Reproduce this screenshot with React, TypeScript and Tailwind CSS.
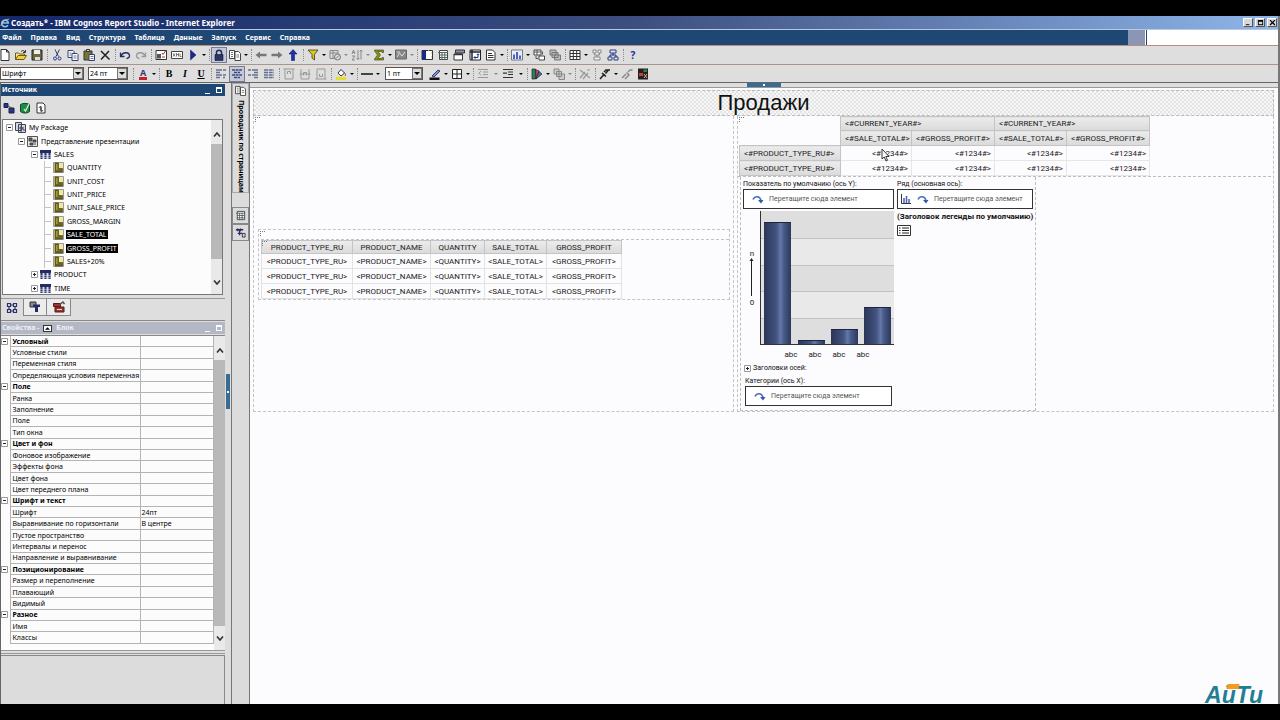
import type { ReactNode } from "react";

const ICONS: Record<string, ReactNode> = {
  new: <path d="M2 .5h5.500L10 3v8.500H2zM7.500.5V3H10" fill="#fff" stroke="#333" />,
  open: (
    <>
      <path d="M.5 10.500V4h3l1 1h5v1.500" fill="#ffe98a" stroke="#6b5b12" />
      <path d="M.5 10.500 3 6.500h8.500l-2.500 4z" fill="#f3cf3f" stroke="#6b5b12" />
      <path d="M6 2.500c1.500-1.500 3-1 4 .5M10.500 1v2.500H8" fill="none" stroke="#333" />
    </>
  ),
  save: (
    <>
      <path d="M1 1h10v10H1z" fill="#6b6a3c" stroke="#222" />
      <path d="M3 1h6v4H3z" fill="#eee" />
      <path d="M4 8h5v3H4z" fill="#ddd" />
    </>
  ),
  cut: (
    <>
      <path d="M4 .5 7.500 7.500M8.500.5 5 7.500" fill="none" stroke="#33406f" />
      <circle cx="4" cy="9.500" r="1.500" fill="none" stroke="#2a3c8c" />
      <circle cx="8.500" cy="9.500" r="1.500" fill="none" stroke="#2a3c8c" />
    </>
  ),
  copy: (
    <>
      <path d="M1 1.500h5l1 1v6H1z" fill="#fff" stroke="#33406f" />
      <path d="M5 4.500h5l1 1v6H5z" fill="#fff" stroke="#33406f" />
      <path d="M6.500 7h3M6.500 9h3M2.500 4h2M2.500 6h2" stroke="#6c78a8" />
    </>
  ),
  paste: (
    <>
      <path d="M1 2h8v9H1z" fill="#7b7433" stroke="#333" />
      <path d="M3.500.5h3v2h-3z" fill="#ddd" stroke="#333" />
      <path d="M6 5.500h5.500v6H6z" fill="#fff" stroke="#33406f" />
      <path d="M7.500 7.500h3M7.500 9.500h3" stroke="#6c78a8" />
    </>
  ),
  del: <path d="M2 2 10.500 10.500M10 2 2 10.500" fill="none" stroke="#222" strokeWidth="1.500" />,
  undo: <path d="M1.500 3.500v4h4M2 7c1.500-4 8-4.500 8.500-.5.2 1.500-1 3-3 3" fill="none" stroke="#222c66" strokeWidth="1.300" />,
  redo: <path d="M10.500 3.500v4h-4M10 7C8.500 3 2 2.500 1.500 6.500c-.2 1.500 1 3 3 3" fill="none" stroke="#999" strokeWidth="1.300" />,
  validate: (
    <>
      <path d="M1 1.500h10.500v9H1z" fill="#fff" stroke="#333" />
      <path d="M2 5h4v4.500H2z" fill="#555" />
      <path d="M7 4l1 1.500L10.500 2M7 8h3" fill="none" stroke="#a33" />
    </>
  ),
  xml: (
    <>
      <path d="M.5 2.500h11v7H.5z" fill="#fff" stroke="#444" />
      <path d="M2 4.500 4 7.500M4 4.500 2 7.500M5.500 7.500v-3l1 1.500 1-1.500v3M9 4.500v3h1.500" fill="none" stroke="#555" strokeWidth=".8" />
    </>
  ),
  run: <path d="M3.500 1v10L9 6z" fill="#1a2b8f" stroke="#10195c" strokeWidth=".5" />,
  lock: (
    <>
      <path d="M3.500 6V3.500c0-3 5-3 5 0V6" fill="none" stroke="#222a55" strokeWidth="1.500" />
      <path d="M2 5.500h8v6H2z" fill="#2b3468" stroke="#111633" strokeWidth=".6" />
    </>
  ),
  pages: (
    <>
      <path d="M.5 1.500h5v8h-5zM6 2.500h3.500l2 2v7H6z" fill="#fff" stroke="#444" />
      <path d="M2 3.500h2M2 5.500h2M2 7.500h2M7.500 6h2.500M7.500 8h2.500" stroke="#777" />
    </>
  ),
  back: <path d="M.5 6 5 2.500v2.300h6.500v2.400H5v2.300z" fill="#777" />,
  forward: <path d="M11.500 6 7 2.500v2.300H.5v2.400H7v2.300z" fill="#777" />,
  up: <path d="M6 .5 10 5H7.500v6.500h-3V5H2z" fill="#1f2fae" stroke="#141d66" strokeWidth=".6" />,
  filter: <path d="M1 1h10L7.500 5.500V11L5 9V5.500z" fill="#d8c62c" stroke="#3c3a14" strokeWidth=".8" />,
  filterOff: (
    <>
      <path d="M1 1.500h8v8H1zM1 4h8M4 1.500v8" fill="none" stroke="#888" />
      <circle cx="8.500" cy="8" r="3" fill="#ddd" stroke="#777" />
      <path d="m7 9.500 3-3" stroke="#777" />
    </>
  ),
  sort: (
    <path d="M1 5l1.500-4L4 5M1.500 3.500h2M1 7h3l-3 4h3M7 1v9.500M5.500 9 7 10.500 8.500 9M10 10.500V1M9 2.500 10 1l1.500 1.500" fill="none" stroke="#888" />
  ),
  sigma: (
    <path d="M1.500 1h9v2.500H9L8.500 2.500H5L7.500 6 5 9.500h3.500L9 8.500h1.500V11h-9v-1L4.500 6l-3-4z" fill="#8b8f1c" stroke="#3c3e12" strokeWidth=".6" />
  ),
  explore: (
    <>
      <path d="M.5 1h11v9H.5z" fill="#888" stroke="#666" />
      <path d="M2 8l2.500-4L7 7l3-4M2 3h3" fill="none" stroke="#ddd" />
    </>
  ),
  section: (
    <>
      <path d="M1 1.500h10.500v9H1z" fill="#fff" stroke="#333" />
      <path d="M1 1.500h4v9H1z" fill="#1c2a86" />
      <path d="M7 1.500h1M10 4h1M10 8h1" stroke="#c9b93c" />
    </>
  ),
  pivot: (
    <>
      <path d="M2.500 1.500h8v9h-8z" fill="#fff" stroke="#444" />
      <path d="M1 3.500h10M2.500 6h8M2.500 8.500h8M5 3v8M7.800 3v8" stroke="#566" />
    </>
  ),
  header: (
    <>
      <path d="M2.500 1h9v3h-9z" fill="#8d93a8" stroke="#333" />
      <path d="M1 5h8.500v6H1z" fill="#fff" stroke="#333" />
      <path d="M1 5.500h8.500" stroke="#333" strokeWidth="1.500" />
    </>
  ),
  swap: (
    <>
      <path d="M1 1h10.500v10H1z" fill="#fff" stroke="#222" />
      <path d="M1 3h10M3 1v10" stroke="#223" strokeWidth="1.500" />
      <path d="M5 8.500h4V5M7.800 6 9 4.800 10.200 6M6.200 7.300 5 8.500l1.200 1.200" fill="none" stroke="#1c2a86" />
    </>
  ),
  doc: (
    <>
      <path d="M1.500 1h6L10 3.500V11H1.500z" fill="#fff" stroke="#333" />
      <path d="M3 4.500h4M3 6.500h5.500M3 8.500h5.500" stroke="#333" />
    </>
  ),
  chart: (
    <>
      <path d="M.5 1h11v10H.5z" fill="#e8ecff" stroke="#777" />
      <path d="M3 10V5.500M6 10V3M9 10V6.500" stroke="#2b3fb0" strokeWidth="1.600" />
    </>
  ),
  linkTable: (
    <>
      <path d="M1 1h7v5H1zM6 7h5.500v4H6z" fill="#fff" stroke="#444" />
      <path d="M1 3h7M4 1v5M9.500 2.500v3M3 7v2.500h2" fill="none" stroke="#555" />
    </>
  ),
  linkOff: <path d="M1 1h6v5H1zM3 3.500h6v5H3zM5.500 6h6v5h-6z" fill="#bbb" stroke="#777" />,
  table: <path d="M1 1.500h10v9H1zM1 4.500h10M1 7.500h10M4.300 1.500v9M7.700 1.500v9" fill="#fff" stroke="#333" />,
  splitOff: <path d="M2 1h3v3H2zM7 1h3v3H7zM3 8h6v3H3zM3.500 4v2h5V4M6 6v2" fill="#eee" stroke="#888" />,
  split: (
    <>
      <path d="M3 1h6v3H3zM1 8h4v3H1zM7 8h4v3H7z" fill="#dfe4ff" stroke="#333d70" />
      <path d="M6 4v2M3 8V6h6v2" fill="none" stroke="#1c2a86" />
    </>
  ),
  alignLeft: <path d="M1 2h6M8 2h3M1 4.500h4M1 7h6M8 7h3M1 9.500h4M8 9.500h2" stroke="#66718f" strokeWidth="1.300" />,
  alignCenter: <path d="M1 2h10M3 4.500h6M1 7h10M3 9.500h6" stroke="#3c4a7c" strokeWidth="1.500" strokeDasharray="3 .6" />,
  alignRight: <path d="M1 2h3M5 2h6M7 4.500h4M1 7h3M5 7h6M7 9.500h4" stroke="#66718f" strokeWidth="1.300" />,
  justify: <path d="M1 2h10M1 4.500h10M1 7h10M1 9.500h10" stroke="#66718f" strokeWidth="1.300" strokeDasharray="4 .7" />,
  vTop: <path d="M.5 1h11M2 1v10h8V1M4.500 6V3.500h3V6" fill="none" stroke="#999" />,
  vMid: <path d="M.5 6h11M2 1v10h8V1M4.500 7.500v-3h3v3" fill="none" stroke="#999" />,
  vBottom: <path d="M.5 11h11M2 11V1h8v10M4.500 6v2.500h3V6" fill="none" stroke="#999" />,
  lineStyle: <path d="M0 6h12" stroke="#111" strokeWidth="1.500" />,
  borders: <path d="M1.500 1.500h9v9h-9zM6 1.500v9M1.500 6h9" fill="#fff" stroke="#222" />,
  indentOff: <path d="M1 1.500h10M6 4h5M6 6.500h5M1 9.500h10M4 3 2 5.200 4 7.500" fill="none" stroke="#999" />,
  indent: <path d="M1 1.500h10M6 4h5M6 6.500h5M1 9.500h10M1 5.200h4" fill="none" stroke="#333" strokeWidth="1.200" />,
  styles: (
    <>
      <path d="M1 1h3.500v10H1z" fill="#2d7c5f" stroke="#222" strokeWidth=".7" />
      <path d="M4.500 1.500 8 3 5 11z" fill="#c2503c" stroke="#222" strokeWidth=".7" />
      <path d="M8 3.500 11 6l-6 5z" fill="#4f69c9" stroke="#222" strokeWidth=".7" />
    </>
  ),
  group: <path d="M1 1h5v5H1zM3.500 3.500h5v5h-5zM6 6h5.500v5.500H6z" fill="#ccc" stroke="#888" />,
  clear: <path d="M1 10l5-6M4 11l5-6M1 2l10 8M8 2h3" fill="none" stroke="#999" strokeWidth="1.200" />,
  pick: <path d="M1 11l4.500-5M3 5l4 3.500M6.500 5.500 9 2.500M5 4l2-2h4" fill="none" stroke="#222" strokeWidth="1.600" />,
  apply: <path d="M1 10l4-4M4 11l4-4M5.500 4.500l3 3M9 2h2.500M7 4l2-2" fill="none" stroke="#888" strokeWidth="1.400" />,
  cond: (
    <>
      <path d="M1 .5h10v11H1z" fill="#222" />
      <path d="M2 5h4v3H2z" fill="#d23b2f" />
      <path d="M6.500 1.500h3.500V4H6.500z" fill="#2e8a3a" />
      <path d="M7 6l3 4M10 6 7 10" stroke="#e8a0a0" />
    </>
  ),
};

function Glyph({ name, className = "size-3" }: { name: string; className?: string }) {
  return (
    <svg viewBox="0 0 12 12" className={`${className} shrink-0`} aria-hidden="true">
      {ICONS[name]}
    </svg>
  );
}

function Tool({ name, label, pressed }: { name: string; label: string; pressed?: boolean }) {
  return (
    <button
      aria-label={label}
      className={`flex h-4 w-4 shrink-0 items-center justify-center ${pressed ? "border border-[#777c94] bg-[#c5c8d6]" : ""}`}
    >
      <Glyph name={name} />
    </button>
  );
}

function TextTool({ label, children }: { label: string; children: ReactNode }) {
  return (
    <button aria-label={label} className="flex h-4 w-4 shrink-0 items-center justify-center font-['Liberation_Serif',serif] text-[10px] leading-3 font-bold">
      {children}
    </button>
  );
}

function Arrow({ wide, off }: { wide?: boolean; off?: boolean }) {
  return (
    <button aria-label="Открыть список" className={`flex h-4 shrink-0 items-center justify-center ${wide ? "w-[9px]" : "w-[6px]"} ${off ? "text-[#888]" : "text-black"}`}>
      <svg viewBox="0 0 4 2" className="h-[2px] w-1" aria-hidden="true">
        <path d="M0 0h4L2 2z" fill="currentColor" />
      </svg>
    </button>
  );
}

function Sep() {
  return (
    <span className="flex w-1 shrink-0 justify-center">
      <span className="h-3 border-l border-dotted border-[#8a8a8a]" />
    </span>
  );
}

function Combo({ label, value, className }: { label: string; value: string; className: string }) {
  return (
    <span className={`relative flex h-[13px] shrink-0 border border-[#555] bg-white ${className}`}>
      <select aria-label={label} className="w-full appearance-none px-px text-[7px] leading-[11px] outline-none">
        <option>{value}</option>
      </select>
      <span className="pointer-events-none absolute inset-y-0 right-0 flex w-[10px] items-center justify-center border border-[#777] bg-[#dcdcdc]">
        <svg viewBox="0 0 6 3" className="h-[3px] w-[6px]" aria-hidden="true">
          <path d="M0 0h6L3 3z" />
        </svg>
      </span>
    </span>
  );
}

function TitleBar() {
  return (
    <header className="flex h-[13px] shrink-0 items-center justify-between bg-linear-to-r from-[#14286a] via-[#3d4f80] to-[#8fb6ea]">
      <div className="flex items-center gap-px text-white">
        <svg viewBox="0 0 12 12" className="size-[10px]" aria-hidden="true">
          <path d="M9.500 8.500A4 4 0 1 1 10 6H3" fill="none" stroke="#7cc4f2" strokeWidth="2" />
          <path d="M1 9.500C2 5 7 1 11 1.500" fill="none" stroke="#e8c860" />
        </svg>
        <h1 className="text-[8px] leading-3 font-bold whitespace-nowrap">Создать* - IBM Cognos Report Studio - Internet Explorer</h1>
      </div>
      <div className="flex gap-[2px] pr-px">
        {[
          ["Свернуть", "M1 6h4v1H1z"],
          ["Развернуть", "M1 1h6v6H1zM2 3v3h4V3z"],
          ["Закрыть", "M1 1h1l2 2 2-2h1v1L5 4l2 2v1H6L4 5 2 7H1V6l2-2-2-2z"],
        ].map(([label, d]) => (
          <button key={label} aria-label={label} className="flex h-[9px] w-[10px] items-center justify-center border border-t-white border-r-[#555] border-b-[#555] border-l-white bg-[#d8d8d8]">
            <svg viewBox="0 0 8 8" className="size-[7px]" aria-hidden="true">
              <path d={d} fillRule="evenodd" />
            </svg>
          </button>
        ))}
      </div>
    </header>
  );
}

const MENU = ["Файл", "Правка", "Вид", "Структура", "Таблица", "Данные", "Запуск", "Сервис", "Справка"];

function MenuBar() {
  return (
    <nav className="flex h-4 shrink-0 border-t border-[#b9c9dd] bg-[#1f4774]">
      <div className="flex flex-1 items-center gap-[9px] pl-[2px] text-white">
        {MENU.map((m) => (
          <button key={m} className="text-[7px] leading-3 font-bold">
            {m}
          </button>
        ))}
      </div>
      <div className="w-[18px] border-r border-white bg-[#8a96b4]" />
      <div className="ml-px w-[131px] bg-white" />
    </nav>
  );
}

function MainTools() {
  return (
    <div className="flex h-[19px] shrink-0 items-center overflow-hidden border-t border-[#b98f7c] bg-[#dedede]">
      <div className="-ml-[3px] flex items-center">
        <Tool name="new" label="Создать" />
        <Tool name="open" label="Открыть" />
        <Tool name="save" label="Сохранить" />
        <Sep />
        <Tool name="cut" label="Вырезать" />
        <Tool name="copy" label="Копировать" />
        <Tool name="paste" label="Вставить" />
        <Tool name="del" label="Удалить" />
        <Sep />
        <Tool name="undo" label="Отменить" />
        <Tool name="redo" label="Повторить" />
        <Sep />
        <Tool name="validate" label="Проверить" />
        <Tool name="xml" label="XML" />
        <Tool name="run" label="Запустить" />
        <Arrow />
        <Sep />
        <Tool name="lock" label="Заблокировать" pressed />
        <Tool name="pages" label="Страницы" />
        <Arrow />
        <Sep />
        <Tool name="back" label="Назад" />
        <Tool name="forward" label="Вперед" />
        <Tool name="up" label="Вверх" />
        <Sep />
        <Tool name="filter" label="Фильтры" />
        <Arrow />
        <Tool name="filterOff" label="Подавить" />
        <Arrow off />
        <Tool name="sort" label="Сортировать" />
        <Arrow off />
        <Tool name="sigma" label="Итоги" />
        <Arrow />
        <Tool name="explore" label="Исследовать" />
        <Arrow off />
        <Sep />
        <Tool name="section" label="Раздел" />
        <Tool name="pivot" label="Перекрестная таблица" />
        <Tool name="header" label="Заголовок" />
        <Tool name="swap" label="Поменять местами" />
        <Tool name="doc" label="Колонтитулы" />
        <Arrow />
        <Sep />
        <Tool name="chart" label="Диаграмма" />
        <Arrow />
        <Tool name="linkTable" label="Связать" />
        <Tool name="linkOff" label="Детализация" />
        <Sep />
        <Tool name="table" label="Вставить таблицу" />
        <Arrow />
        <Tool name="splitOff" label="Объединить" />
        <Tool name="split" label="Разделить" />
        <Sep />
        <TextTool label="Справка">
          <span className="font-['Noto_Sans',sans-serif] text-[#22309c]">?</span>
        </TextTool>
      </div>
    </div>
  );
}

function FormatTools() {
  return (
    <div className="flex h-[19px] shrink-0 items-center overflow-hidden border-t border-b border-t-[#a8958c] border-b-[#666] bg-[#dedede]">
      <Combo label="Шрифт" value="Шрифт" className="mr-1 w-[84px]" />
      <Combo label="Размер" value="24 пт" className="mr-[3px] w-10" />
      <Sep />
      <TextTool label="Цвет текста">
        <span className="h-3 border-b-[3px] border-[#c8202c] px-px font-['Noto_Sans',sans-serif] text-[9px] leading-[9px] text-[#33406f]">A</span>
      </TextTool>
      <Arrow />
      <Sep />
      <TextTool label="Полужирный">B</TextTool>
      <TextTool label="Курсив">
        <i>I</i>
      </TextTool>
      <TextTool label="Подчеркнутый">
        <u>U</u>
      </TextTool>
      <Sep />
      <Tool name="alignLeft" label="По левому краю" />
      <Tool name="alignCenter" label="По центру" pressed />
      <Tool name="alignRight" label="По правому краю" />
      <Tool name="justify" label="По ширине" />
      <Sep />
      <Tool name="vTop" label="По верхнему краю" />
      <Tool name="vMid" label="По середине" />
      <Tool name="vBottom" label="По нижнему краю" />
      <Sep />
      <button aria-label="Цвет фона" className="flex h-4 w-4 shrink-0 items-center justify-center">
        <svg viewBox="0 0 12 12" className="size-3" aria-hidden="true">
          <path d="M3 5 6 1.500 9.500 5 6 8z" fill="#fff" stroke="#333" />
          <path d="M9.500 5c1.500 1 1 2.500.5 3" fill="none" stroke="#a33" />
          <path d="M1 9h10v3H1z" fill="#e6df2a" />
        </svg>
      </button>
      <Arrow />
      <Sep />
      <Tool name="lineStyle" label="Стиль линии" />
      <Arrow />
      <Combo label="Толщина" value="1 пт" className="mx-1 w-[38px]" />
      <button aria-label="Цвет линии" className="flex h-4 w-4 shrink-0 items-center justify-center">
        <svg viewBox="0 0 12 12" className="size-3" aria-hidden="true">
          <path d="M3 8 9 2l2 1-6 6z" fill="#7f93cf" stroke="#333d70" />
          <path d="M.5 9.500h10V12H.5z" fill="#111" />
        </svg>
      </button>
      <Arrow />
      <Tool name="borders" label="Границы" />
      <Arrow />
      <Sep />
      <Tool name="indentOff" label="Уменьшить отступ" />
      <Arrow wide off />
      <Tool name="indent" label="Увеличить отступ" />
      <Arrow wide />
      <Sep />
      <Tool name="styles" label="Стили" />
      <Arrow />
      <Tool name="group" label="Группировать" />
      <Arrow off />
      <Sep />
      <Tool name="clear" label="Очистить" />
      <Sep />
      <Tool name="pick" label="Взять стиль" />
      <Arrow />
      <Tool name="apply" label="Применить стиль" />
      <Tool name="cond" label="Условные стили" />
    </div>
  );
}

function PaneHeader({ className, children }: { className: string; children: ReactNode }) {
  return (
    <div className={`flex h-3 shrink-0 items-center text-[7px] leading-3 font-bold text-white ${className}`}>
      {children}
      <button aria-label="Свернуть" className="ml-auto flex h-2 w-2 items-end">
        <span className="h-px w-[5px] bg-white" />
      </button>
      <button aria-label="Развернуть" className="mx-[3px] h-[6px] w-[6px] border border-t-2 border-white" />
    </div>
  );
}

function Toggle({ open }: { open: boolean }) {
  return (
    <button aria-label={open ? "Свернуть" : "Развернуть"} className="size-[7px] shrink-0">
      <svg viewBox="0 0 7 7" className="size-[7px]" aria-hidden="true">
        <path d="M.5.5h6v6h-6z" fill="#fff" stroke="#999" />
        <path d={open ? "M2 3.500h3" : "M2 3.500h3M3.500 2v3"} stroke="#222" />
      </svg>
    </button>
  );
}

function TreeIcon({ kind }: { kind: string }) {
  return (
    <svg viewBox="0 0 11 11" className="size-[11px] shrink-0" aria-hidden="true">
      {kind === "package" && (
        <>
          <path d="M.5.5h6v8h-6zM3.500 2.500h7v8h-7z" fill="#d5d8e6" stroke="#444" />
          <path d="M5 5h2v2H5zM8 8h2M8 5v3M5 9h2" fill="none" stroke="#39447a" />
        </>
      )}
      {kind === "view" && (
        <>
          <path d="M.5.5h10v10H.5z" fill="#e4e4e4" stroke="#555" />
          <path d="M2 2h3v3H2zM6 4h3v2H6zM3 7h3v2H3zM7 8h2" fill="#666" stroke="#333" strokeWidth=".8" />
        </>
      )}
      {kind === "subject" && (
        <>
          <path d="M0 1h11v3H0z" fill="#252a63" />
          <path d="M0 4h11v6H0z" fill="#d5d8e6" />
          <path d="M1.500 4v6M5.500 4v6M9.500 4v6" stroke="#31386e" strokeWidth="2" strokeDasharray="2 .5" />
        </>
      )}
      {kind === "measure" && (
        <>
          <path d="M.5.5h10v10H.5z" fill="#efe9a8" stroke="#999" />
          <path d="M2 1h3.500v5.500H9.500V10H2z" fill="#6d661a" stroke="#3e3a10" strokeWidth=".6" />
          <path d="M3 3h1.500M3 5h1.500M3 7h1.500" stroke="#d9d164" />
        </>
      )}
    </svg>
  );
}

interface TreeRow {
  label: string;
  level: number;
  kind: string;
  open?: boolean;
  selected?: boolean;
}

const TREE: TreeRow[] = [
  { label: "My Package", level: 0, kind: "package", open: true },
  { label: "Представление презентации", level: 1, kind: "view", open: true },
  { label: "SALES", level: 2, kind: "subject", open: true },
  { label: "QUANTITY", level: 3, kind: "measure" },
  { label: "UNIT_COST", level: 3, kind: "measure" },
  { label: "UNIT_PRICE", level: 3, kind: "measure" },
  { label: "UNIT_SALE_PRICE", level: 3, kind: "measure" },
  { label: "GROSS_MARGIN", level: 3, kind: "measure" },
  { label: "SALE_TOTAL", level: 3, kind: "measure", selected: true },
  { label: "GROSS_PROFIT", level: 3, kind: "measure", selected: true },
  { label: "SALES+20%", level: 3, kind: "measure" },
  { label: "PRODUCT", level: 2, kind: "subject", open: false },
  { label: "TIME", level: 2, kind: "subject", open: false },
];

const INDENT = ["pl-[3px]", "pl-[15px]", "pl-[28px]", "pl-[41px]"];

function ScrollBar({ thumb }: { thumb: string }) {
  return (
    <div className="flex w-[11px] shrink-0 flex-col bg-[#e9e9e9]">
      <button aria-label="Прокрутить вверх" className="flex h-6 items-center justify-center pt-1">
        <svg viewBox="0 0 8 5" className="h-[5px] w-2" aria-hidden="true">
          <path d="M1 4.500 4 1l3 3.500" fill="none" stroke="#333" strokeWidth="1.600" />
        </svg>
      </button>
      <div className={thumb} />
      <button aria-label="Прокрутить вниз" className="mt-auto flex h-6 items-center justify-center">
        <svg viewBox="0 0 8 5" className="h-[5px] w-2" aria-hidden="true">
          <path d="M1 .5 4 4l3-3.500" fill="none" stroke="#333" strokeWidth="1.600" />
        </svg>
      </button>
    </div>
  );
}

function SourcePane() {
  return (
    <section className="flex shrink-0 flex-col">
      <PaneHeader className="bg-[#1f4774] pl-px">Источник</PaneHeader>
      <div className="flex h-[23px] items-center gap-1 pl-[2px]">
        <button aria-label="Объекты">
          <svg viewBox="0 0 12 12" className="size-3" aria-hidden="true">
            <path d="M1 1.500h4v4H1zM6 6h5v5H6z" fill="#2b3680" stroke="#1a2050" />
            <path d="M5 4l4 2" stroke="#555" />
          </svg>
        </button>
        <button aria-label="Источник данных">
          <svg viewBox="0 0 12 12" className="size-3" aria-hidden="true">
            <path d="M1.500 2.500C3 1 9 1 10.500 2.500v7C9 11.500 3 11.500 1.500 9.500z" fill="#1f8a46" stroke="#0c4a22" />
            <path d="M5 7l1.500 2L10 2" fill="none" stroke="#d7f0dc" strokeWidth="1.200" />
          </svg>
        </button>
        <button aria-label="Обновить">
          <svg viewBox="0 0 12 12" className="size-3" aria-hidden="true">
            <path d="M2 1h6l2 2v8H2z" fill="#fff" stroke="#333" />
            <path d="M4 6l1.500-2L7 6M5 8l1.500 2L8 8M5.500 4.500V8M6.500 6v3" fill="none" stroke="#333" strokeWidth=".8" />
          </svg>
        </button>
      </div>
      <div className="mr-[2px] ml-px flex h-[176px] overflow-hidden border border-[#777] bg-[#fcfcfc]">
        <ul className="grid h-[175px] flex-1 auto-rows-fr pt-px text-[7px] leading-[9px]">
          {TREE.map((row) => (
            <li key={row.label} className={`flex items-center gap-[2px] whitespace-nowrap ${INDENT[row.level]}`}>
              {row.open === undefined ? (
                <span className="flex w-[7px] items-center self-stretch border-l border-[#c4c4c4]">
                  <span className="w-full border-t border-[#c4c4c4]" />
                </span>
              ) : (
                <Toggle open={row.open} />
              )}
              <TreeIcon kind={row.kind} />
              <span className={row.selected ? "bg-black px-px text-white" : "px-px"}>{row.label}</span>
            </li>
          ))}
        </ul>
        <ScrollBar thumb="h-[115px] bg-[#b9b9b9]" />
      </div>
      <div className="mt-[3px] flex h-[18px] border-t border-[#999]">
        <button aria-label="Источник" className="flex w-[22px] items-center justify-center">
          <svg viewBox="0 0 12 12" className="size-3" aria-hidden="true">
            <path d="M1.500 1.500h3v3h-3zM7.500 1.500h3v3h-3zM1.500 7.500h3v3h-3zM7.500 7.500h3v3h-3zM4.500 3h3M3 4.500v3M9 4.500v3M4.500 9h3" fill="none" stroke="#2b3166" strokeWidth="1.200" />
          </svg>
        </button>
        <button aria-label="Элементы данных" className="flex w-6 items-center justify-center border-r border-b border-l border-[#888] bg-[#ececec]">
          <svg viewBox="0 0 12 12" className="size-3" aria-hidden="true">
            <path d="M1 1h6v5H1z" fill="#888" stroke="#333" />
            <path d="M4 3.500h7v2.500H9V11H6V6H4z" fill="#252a63" />
          </svg>
        </button>
        <button aria-label="Инструменты" className="flex w-6 items-center justify-center border-r border-b border-[#888] bg-[#ececec]">
          <svg viewBox="0 0 12 12" className="size-3" aria-hidden="true">
            <path d="M.5 2.500h7v3h-7zM2 6h9v5H2z" fill="#a3322c" stroke="#5a1a18" />
            <path d="M6 4l4-3 1.500 2" fill="none" stroke="#555" strokeWidth="1.500" />
            <path d="M4 8.500h5" stroke="#ddd" />
          </svg>
        </button>
      </div>
    </section>
  );
}

const PROPS: { group: string; rows: [string, string][] }[] = [
  { group: "Условный", rows: [["Условные стили", ""], ["Переменная стиля", ""], ["Определяющая условия переменная", ""]] },
  { group: "Поле", rows: [["Ранка", ""], ["Заполнение", ""], ["Поле", ""], ["Тип окна", ""]] },
  { group: "Цвет и фон", rows: [["Фоновое изображение", ""], ["Эффекты фона", ""], ["Цвет фона", ""], ["Цвет переднего плана", ""]] },
  {
    group: "Шрифт и текст",
    rows: [["Шрифт", "24пт"], ["Выравнивание по горизонтали", "В центре"], ["Пустое пространство", ""], ["Интервалы и перенос", ""], ["Направление и выравнивание", ""]],
  },
  { group: "Позиционирование", rows: [["Размер и переполнение", ""], ["Плавающий", ""], ["Видимый", ""]] },
  { group: "Разное", rows: [["Имя", ""], ["Классы", ""]] },
];

function PropertiesPane() {
  return (
    <section className="mt-1 flex min-h-0 flex-1 flex-col border-t border-[#888] pt-px">
      <PaneHeader className="bg-[#b4b8c4] pl-px">
        <span className="text-[#eef0f5]">Свойства -</span>
        <span className="mx-1 flex h-[7px] w-[9px] items-center justify-center border border-[#333] bg-white">
          <svg viewBox="0 0 6 3" className="h-[3px] w-[5px]" aria-hidden="true">
            <path d="M0 3h6L3 0z" />
          </svg>
        </span>
        <span className="text-[#eef0f5]">Блок</span>
      </PaneHeader>
      <div className="mt-px flex border-t border-[#888] bg-[#fcfcfc]">
        <div className="min-w-0 flex-1 pb-[6px]">
          <table className="h-[308px] w-full table-fixed border-collapse text-[7px] leading-[9px]">
            <colgroup>
              <col className="w-[9px]" />
              <col className="w-[130px]" />
              <col />
            </colgroup>
            <tbody>
              {PROPS.map((g) => [
                <tr key={g.group}>
                  <td className="p-0">
                    <span className="flex">
                      <Toggle open />
                    </span>
                  </td>
                  <th scope="rowgroup" className="border border-t-0 border-[#b4b4b4] p-0 pl-[2px] text-left font-bold">
                    {g.group}
                  </th>
                  <td className="border-r border-b border-[#b4b4b4] p-0" />
                </tr>,
                ...g.rows.map(([name, value]) => (
                  <tr key={`${g.group}-${name}`}>
                    <td className="p-0" />
                    <td className="border border-[#b4b4b4] p-0 pl-[2px] whitespace-nowrap">{name}</td>
                    <td className="border border-[#b4b4b4] p-0 pl-px whitespace-nowrap">{value}</td>
                  </tr>
                )),
              ])}
            </tbody>
          </table>
        </div>
        <ScrollBar thumb="flex-1 bg-[#b9b9b9]" />
      </div>
      <div className="h-1 shrink-0 border-y border-[#999]" />
      <div className="mt-px flex-1 border-t border-r border-[#888] bg-[#dcdcdc]" />
    </section>
  );
}

function ExplorerStrip() {
  return (
    <div className="flex w-[19px] shrink-0 flex-col border-x border-[#777] bg-[#dcdcdc] text-[7px]">
      <button className="flex h-[110px] flex-col items-center gap-1 border border-[#aaa] pt-px font-bold">
        <Glyph name="pages" className="size-[11px]" />
        <span className="leading-3 whitespace-nowrap [writing-mode:vertical-rl]">Проводник по страницам</span>
      </button>
      <button aria-label="Проводник запросов" className="mt-[14px] flex h-[17px] items-center justify-center border border-[#888]">
        <Glyph name="pivot" className="size-[11px]" />
      </button>
      <button aria-label="Проводник условий" className="flex h-[17px] items-center justify-center border border-[#888]">
        <svg viewBox="0 0 12 12" className="size-[11px]" aria-hidden="true">
          <path d="M1 3h8M3 1.500v3M6 1.500v3M5 3v6M3 7h5" fill="none" stroke="#252a63" strokeWidth="1.400" />
          <path d="M8 7h3v4H8z" fill="#d5d8e6" stroke="#333" />
        </svg>
      </button>
    </div>
  );
}

function Grip() {
  return (
    <svg viewBox="0 0 6 6" className="absolute top-px left-px size-[6px]" aria-hidden="true">
      <path d="M0 0h1v1H0zM2 0h1v1H2zM4 0h1v1H4zM0 2h1v1H0zM0 4h1v1H0z" fill="#777" />
    </svg>
  );
}

const LIST_COLS = ["PRODUCT_TYPE_RU", "PRODUCT_NAME", "QUANTITY", "SALE_TOTAL", "GROSS_PROFIT"];

function ListBlock() {
  return (
    <div className="relative mr-[3px] ml-1 border border-dashed border-[#c4c4c4] pt-[9px] pl-[2px]">
      <Grip />
      <div className="relative border-t border-dashed border-[#c4c4c4]">
        <table className="w-[360px] table-fixed border-collapse text-center text-[8px] leading-[9px] text-[#222]">
          <colgroup>
            <col className="w-[91px]" />
            <col className="w-[78px]" />
            <col className="w-[54px]" />
            <col className="w-[62px]" />
            <col className="w-[75px]" />
          </colgroup>
          <thead>
            <tr className="h-[13px] bg-linear-to-b from-[#ececec] to-[#dadada]">
              {LIST_COLS.map((c) => (
                <th key={c} className="border border-[#c4c4c4] p-0 font-normal">
                  {c}
                </th>
              ))}
            </tr>
          </thead>
          <tbody>
            {[0, 1, 2].map((r) => (
              <tr key={r} className="h-[15px]">
                {LIST_COLS.map((c) => (
                  <td key={c} className="border border-[#e2e2e2] p-0">{`<${c}>`}</td>
                ))}
              </tr>
            ))}
          </tbody>
        </table>
        <Grip />
      </div>
    </div>
  );
}

function Pointer() {
  return (
    <svg viewBox="0 0 9 14" className="absolute top-[2px] left-10 h-[14px] w-[9px]" aria-hidden="true">
      <path d="M1 1v10l2.300-2 1.700 4 1.500-.7-1.700-3.800H8z" fill="#fff" stroke="#222" strokeWidth=".9" />
    </svg>
  );
}

function Crosstab() {
  const head = "border border-[#c4c4c4] bg-linear-to-b from-[#ececec] to-[#dadada] p-0 px-1 text-left font-normal";
  return (
    <div className="relative border-b border-dashed border-[#bdbdbd] pl-px">
      <Grip />
      <table className="w-[410px] table-fixed border-collapse text-[8px] leading-[9px] text-[#222]">
        <colgroup>
          <col className="w-[101px]" />
          <col className="w-[71px]" />
          <col className="w-[83px]" />
          <col className="w-[72px]" />
          <col className="w-[83px]" />
        </colgroup>
        <thead>
          <tr className="h-[14px]">
            <td rowSpan={2} />
            <th colSpan={2} className={head}>{"<#CURRENT_YEAR#>"}</th>
            <th colSpan={2} className={head}>{"<#CURRENT_YEAR#>"}</th>
          </tr>
          <tr className="h-[15px]">
            {["<#SALE_TOTAL#>", "<#GROSS_PROFIT#>", "<#SALE_TOTAL#>", "<#GROSS_PROFIT#>"].map((c, i) => (
              <th key={i} className={head}>
                {c}
              </th>
            ))}
          </tr>
        </thead>
        <tbody>
          {[0, 1].map((r) => (
            <tr key={r} className="h-[15px]">
              <th scope="row" className={head}>{"<#PRODUCT_TYPE_RU#>"}</th>
              {[0, 1, 2, 3].map((c) => (
                <td key={c} className="relative border border-[#e6e6e6] p-0 pr-[3px] text-right">
                  {"<#1234#>"}
                  {r === 0 && c === 0 && <Pointer />}
                </td>
              ))}
            </tr>
          ))}
        </tbody>
      </table>
    </div>
  );
}

function DropZone({ className, stacked }: { className: string; stacked?: boolean }) {
  return (
    <div className={`flex h-5 items-center border border-[#333] bg-white text-[#555] ${className}`}>
      {stacked && (
        <svg viewBox="0 0 10 10" className="mr-[6px] size-[10px] shrink-0" aria-hidden="true">
          <path d="M.5 0v9.500H10" fill="none" stroke="#334" />
          <path d="M3 9V4M5.500 9V2M8 9V5" stroke="#4660b4" strokeWidth="1.500" />
        </svg>
      )}
      <svg viewBox="0 0 12 9" className="mr-[5px] h-[9px] w-3 shrink-0" aria-hidden="true">
        <path d="M1 4.500C3 .5 7.500 1 9 5" fill="none" stroke="#4a6fc0" strokeWidth="1.600" />
        <path d="M6 5h5.500L9 8.500z" fill="#3558ae" />
      </svg>
      <span className="whitespace-nowrap">Перетащите сюда элемент</span>
    </div>
  );
}

// bar x offset and height inside the 134px plot area
const BARS = [
  [3, 123],
  [37, 5],
  [70, 16],
  [103, 38],
];

function BarChart() {
  return (
    <svg viewBox="0 0 151 150" className="mt-px h-[150px] w-[151px]" role="img" aria-label="Столбчатая диаграмма">
      <defs>
        <linearGradient id="bar">
          <stop offset="0" stopColor="#2b3657" />
          <stop offset=".45" stopColor="#42527f" />
          <stop offset=".62" stopColor="#6478a8" />
          <stop offset=".72" stopColor="#4a5c8c" />
          <stop offset="1" stopColor="#2c385c" />
        </linearGradient>
      </defs>
      <path d="M18 1h133v27H18zM18 55h133v26H18zM18 108h133v27H18z" fill="#dedede" />
      <path d="M18 28h133v27H18zM18 81h133v27H18z" fill="#e9e9e9" />
      <path d="M18 28.500h133M18 55.500h133M18 81.500h133M18 108.500h133" stroke="#c2c2c2" />
      {BARS.map(([x, h]) => (
        <g key={x}>
          <rect x={18 + x} y={135 - h} width="27" height={h} fill="url(#bar)" />
          <rect x={18 + x} y={135 - h} width="27" height="1" fill="#1d2540" />
        </g>
      ))}
      <path d="M17.500 1v134M17 134.500h134" stroke="#333" />
      <path d="M8.500 50v36" stroke="#222" />
      <path d="M6.500 51h4L8.500 48z" fill="#222" />
      <g fontSize="8" fill="#222" textAnchor="middle">
        <text x="9" y="46">n</text>
        <text x="9" y="95">0</text>
        <text x="48" y="147">abc</text>
        <text x="72" y="147">abc</text>
        <text x="96" y="147">abc</text>
        <text x="120" y="147">abc</text>
      </g>
    </svg>
  );
}

function ChartBlock() {
  return (
    <div className="ml-[2px] flex w-[296px] gap-[3px] border-r border-b border-l border-dashed border-[#bdbdbd] pt-[3px] pb-1 pl-[2px] text-[7px] leading-[9px] text-[#111]">
      <div className="w-[151px]">
        <p className="whitespace-nowrap">Показатель по умолчанию (ось Y):</p>
        <DropZone className="pl-2" />
        <BarChart />
        <p className="mt-1 flex items-center gap-[2px] pl-px">
          <Toggle open={false} />
          Заголовки осей:
        </p>
        <p className="mt-1 pl-[2px]">Категории (ось X):</p>
        <DropZone className="mr-[2px] ml-[2px] pl-2" />
      </div>
      <div className="w-[136px]">
        <p className="whitespace-nowrap">Ряд (основная ось):</p>
        <DropZone className="pl-[3px]" stacked />
        <p className="mt-[3px] text-[8px] font-bold whitespace-nowrap">(Заголовок легенды по умолчанию)</p>
        <svg viewBox="0 0 14 11" className="mt-1 h-[11px] w-[14px]" aria-hidden="true">
          <path d="M.5.500h13v10H.5z" fill="#fff" stroke="#333" />
          <path d="M2 3h1.500M2 5.500h1.500M2 8h1.500M5 3h7M5 5.500h7M5 8h7" stroke="#222" />
        </svg>
      </div>
    </div>
  );
}

function Canvas() {
  return (
    <main className="relative flex min-w-0 flex-1 flex-col border-t border-[#999] bg-[#fcfbfd] pt-[2px] pl-[3px]">
      <h2 className="mr-1 h-[26px] border border-dashed border-[#bbb] bg-[repeating-conic-gradient(#e3e3e3_0_25%,#f8f8f8_0_50%)] bg-size-[4px_4px] text-center font-['Liberation_Sans',Arial,sans-serif] text-[22px] leading-[24px] text-[#111]">
        Продажи
      </h2>
      <div className="mr-1 grid grid-cols-[482fr_538fr] gap-x-[3px]">
        <div className="relative flex flex-col border border-t-0 border-dashed border-[#c4c4c4] pt-[113px]">
          <Grip />
          <ListBlock />
        </div>
        <div className="border border-t-0 border-dashed border-[#c4c4c4] pr-[2px]">
          <Crosstab />
          <ChartBlock />
        </div>
      </div>
      <div className="absolute right-[15px] bottom-0 font-['Liberation_Sans',Arial,sans-serif] text-[23px] leading-[18px] font-bold text-[#1f7f94] italic">
        АйТи
        <span className="absolute top-[-2px] left-[22px] h-[5px] w-3 -skew-x-12 bg-[#f39a1f]" />
      </div>
    </main>
  );
}

export default function App() {
  return (
    <div className="flex h-screen min-h-[720px] flex-col bg-black py-4 text-black">
      <div className="flex min-h-0 flex-1 flex-col border-r-2 border-[#777] bg-[#dedede] font-['Noto_Sans',Tahoma,sans-serif]">
        <TitleBar />
        <MenuBar />
        <MainTools />
        <FormatTools />
        <div className="flex min-h-0 flex-1">
          <aside className="flex w-[225px] shrink-0 flex-col border-l border-[#666] pt-px">
            <SourcePane />
            <PropertiesPane />
          </aside>
          <div className="flex w-[6px] shrink-0 flex-col justify-center pb-[4px]">
            <button aria-label="Скрыть панель" className="ml-px flex h-[35px] w-1 items-center justify-center bg-[#386c93]">
              <span className="size-[2px] bg-white" />
            </button>
          </div>
          <ExplorerStrip />
          <div className="flex min-w-0 flex-1 flex-col font-[Roboto,Arial,sans-serif]">
            <div className="flex h-[4px] shrink-0 justify-center">
              <button aria-label="Скрыть панели инструментов" className="flex w-[34px] items-center justify-center bg-[#386c93]">
                <span className="size-[2px] bg-white" />
              </button>
            </div>
            <Canvas />
          </div>
        </div>
      </div>
    </div>
  );
}
